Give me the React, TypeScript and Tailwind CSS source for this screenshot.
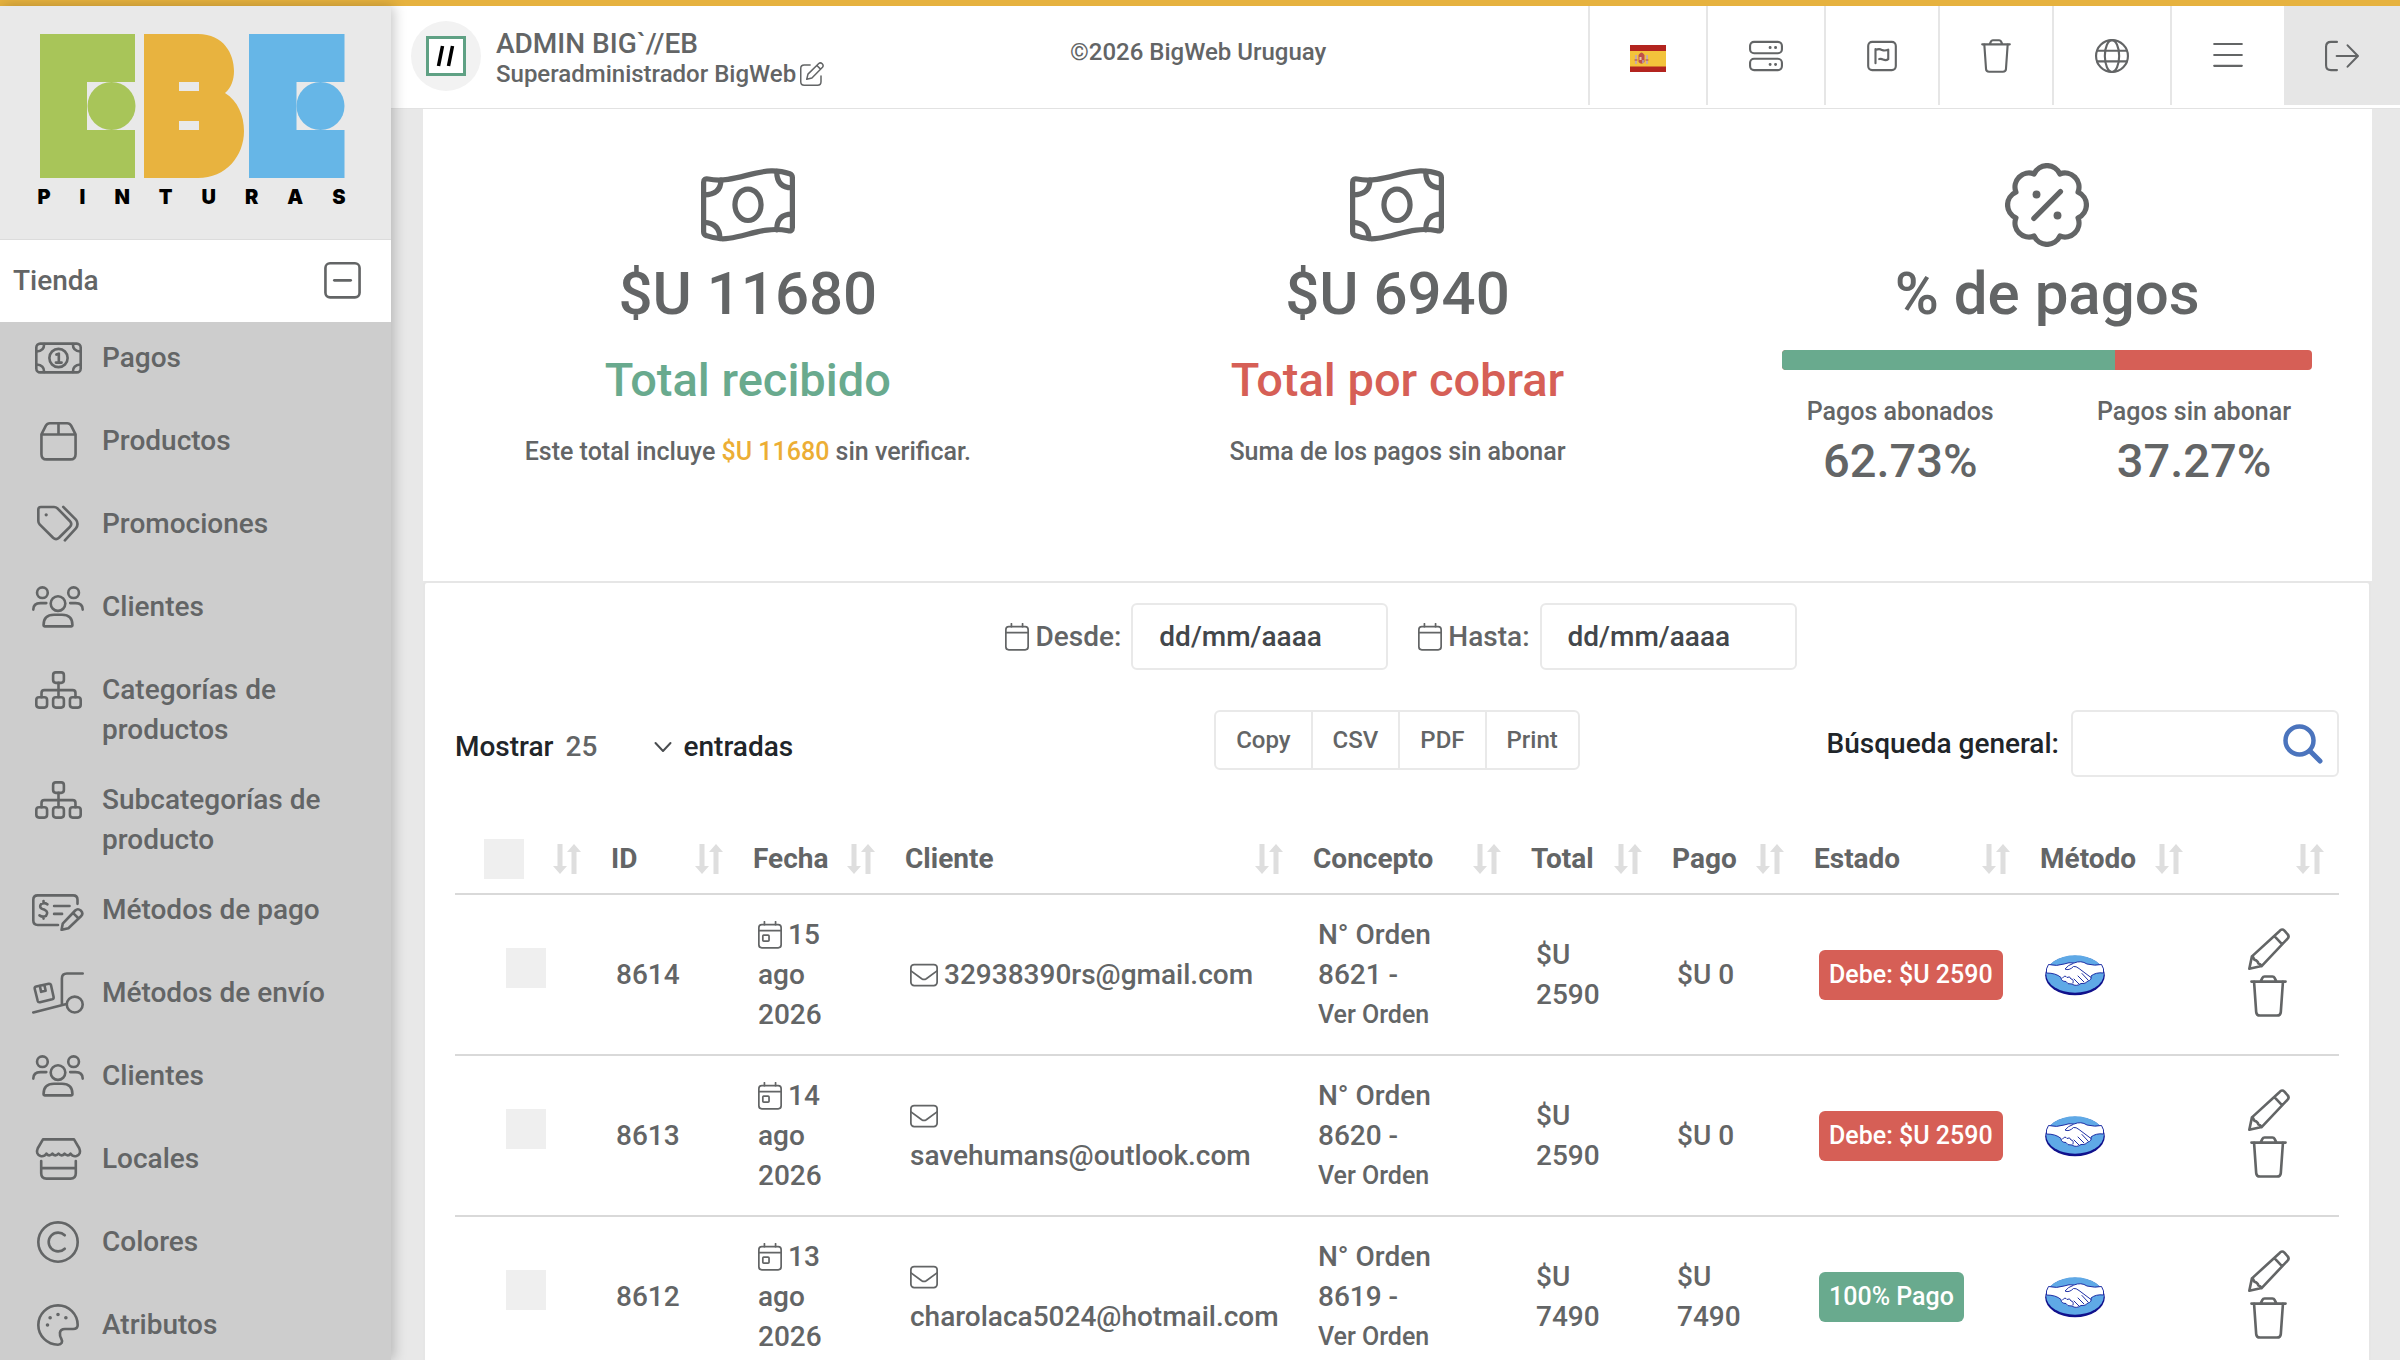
import { useState } from "react";
import type { ReactNode } from "react";

const box = { 448: "0 0 448 512", 512: "0 0 512 512", 576: "0 0 576 512", 640: "0 0 640 512" };

const Icon = ({
  w = 512,
  className = "",
  children,
}: {
  w?: 448 | 512 | 576 | 640;
  className?: string;
  children: ReactNode;
}) => (
  <svg
    viewBox={box[w]}
    className={className}
    fill="none"
    stroke="currentColor"
    strokeWidth="32"
    strokeLinecap="round"
    strokeLinejoin="round"
    aria-hidden="true"
  >
    {children}
  </svg>
);

const trashPath = (
  <>
    <path d="M16 80H432M128 78L150 34Q158 18 176 18H272Q290 18 298 34L320 78" />
    <path d="M48 82L74 452Q77 494 120 494H328Q371 494 374 452L400 82" />
  </>
);

const BillIcon = () => (
  <Icon w={576} className="h-[42px] w-[47px]">
    <rect x="16" y="80" width="544" height="352" rx="48" />
    <circle cx="288" cy="256" r="112" />
    <path d="M112 84Q112 172 20 176M464 84Q464 172 556 176M112 428Q112 340 20 336M464 428Q464 340 556 336" />
    <path d="M262 214L292 202V310M256 312H326" />
  </Icon>
);

const BoxIcon = () => (
  <Icon w={448} className="h-[42px] w-[37px]">
    <path d="M16 176V416Q16 480 80 480H368Q432 480 432 416V176ZM16 176L70 68Q86 40 118 40H330Q362 40 378 68L432 176M224 40V176" />
  </Icon>
);

const TagsIcon = () => (
  <Icon className="h-[42px] w-[42px]">
    <path d="M16 80V220Q16 244 32 260L196 424Q232 456 268 424L400 292Q436 256 400 220L252 68Q230 48 208 48H48Q16 48 16 80Z" />
    <path d="M320 48L474 202Q514 256 474 310L340 456" />
    <circle cx="112" cy="144" r="10" fill="currentColor" strokeWidth="20" />
  </Icon>
);

const UsersIcon = () => (
  <Icon w={640} className="h-[42px] w-[52px]">
    <circle cx="128" cy="80" r="66" />
    <circle cx="512" cy="80" r="66" />
    <circle cx="320" cy="214" r="90" />
    <path d="M16 288Q16 208 104 208H176M624 288Q624 208 536 208H470" />
    <path d="M142 480Q142 352 270 352H370Q498 352 498 480Q498 494 484 494H156Q142 494 142 480Z" />
  </Icon>
);

const SitemapIcon = () => (
  <Icon w={576} className="h-[42px] w-[47px]">
    <rect x="222" y="40" width="132" height="128" rx="34" />
    <rect x="16" y="344" width="132" height="128" rx="34" />
    <rect x="222" y="344" width="132" height="128" rx="34" />
    <rect x="428" y="344" width="132" height="128" rx="34" />
    <path d="M288 168V344M80 344V292Q80 258 114 258H462Q496 258 496 292V344" />
  </Icon>
);

const CheckIcon = () => (
  <Icon w={640} className="h-[42px] w-[52px]">
    <path d="M320 440H70Q16 440 16 386V130Q16 76 70 76H506Q560 76 560 130V180" />
    <path d="M190 186Q150 160 114 182Q82 218 124 242L156 254Q208 282 172 328Q132 350 92 322M142 146V172M142 342V362M272 206H462M272 304H370" />
    <path d="M364 500L378 424L532 262Q564 232 600 262Q636 294 606 330L448 480ZM504 292L574 360" />
  </Icon>
);

const DollyIcon = () => (
  <Icon w={640} className="h-[42px] w-[52px]">
    <path d="M624 16H430Q368 16 368 78V404M16 496L424 390" />
    <circle cx="526" cy="398" r="98" />
    <path d="M34 206Q28 182 52 176L206 142Q228 138 234 160L266 306Q270 328 248 334L98 370Q76 374 70 352ZM96 166L112 242L168 228L152 154" />
  </Icon>
);

const StoreIcon = () => (
  <Icon w={576} className="h-[42px] w-[47px]">
    <path d="M98 16H478L542 124Q572 196 508 220Q462 230 436 190Q404 232 362 190Q326 232 288 190Q250 232 214 190Q172 232 140 190Q114 230 68 220Q4 196 34 124Z" />
    <path d="M76 280V430Q76 496 140 496H436Q500 496 500 430V280M76 368H500" />
  </Icon>
);

const CopyrightIcon = () => (
  <Icon className="h-[42px] w-[42px]">
    <circle cx="256" cy="256" r="240" />
    <path d="M338 174A115 115 0 1 0 338 338" />
  </Icon>
);

const PaletteIcon = () => (
  <Icon className="h-[42px] w-[42px]">
    <path d="M256 16C124 16 16 124 16 256S124 496 256 496C300 496 318 462 296 424C276 388 258 304 340 304H440C474 304 496 286 496 256C496 124 388 16 256 16Z" />
    <g fill="currentColor" strokeWidth="26">
      <circle cx="128" cy="256" r="9" />
      <circle cx="160" cy="168" r="9" />
      <circle cx="256" cy="128" r="9" />
      <circle cx="352" cy="168" r="9" />
    </g>
  </Icon>
);

const BillWaveIcon = () => (
  <Icon w={576} className="h-[84px] w-[94px]">
    <path d="M16 116C16 98 28 94 44 97C186 124 300 52 430 47C480 46 516 54 544 64Q560 70 560 88V394C560 412 548 418 534 414C398 386 300 440 172 460C120 468 76 460 34 444Q16 438 16 420Z" />
    <path d="M122 104Q122 192 18 194M464 50Q464 150 558 150M18 362Q116 366 116 462M464 408Q464 312 558 312" />
    <ellipse cx="288" cy="255" rx="80" ry="96" />
  </Icon>
);

const BadgePercentIcon = () => (
  <Icon className="h-[84px] w-[84px]">
    <path d="M334.5 66.6A86 86 0 0 1 445.4 177.5A86 86 0 0 1 445.4 334.5A86 86 0 0 1 334.5 445.4A86 86 0 0 1 177.5 445.4A86 86 0 0 1 66.6 334.5A86 86 0 0 1 66.6 177.5A86 86 0 0 1 177.5 66.6A86 86 0 0 1 334.5 66.6Z" />
    <path d="M338 174L176 338" />
    <g fill="currentColor" stroke="none">
      <circle cx="192" cy="192" r="24" />
      <circle cx="320" cy="320" r="24" />
    </g>
  </Icon>
);

const CalendarIcon = ({ day = false }: { day?: boolean }) => (
  <Icon w={448} className="inline-block h-7 w-6">
    <rect x="16" y="64" width="416" height="432" rx="56" />
    <path d="M16 176H432M120 8V64M328 8V64" />
    {day && <rect x="90" y="258" width="116" height="112" rx="18" />}
  </Icon>
);

const MailIcon = () => (
  <Icon className="inline-block h-7 w-7">
    <rect x="16" y="64" width="480" height="384" rx="60" />
    <path d="M18 180L214 324Q256 350 298 324L494 180" />
  </Icon>
);

const SortIcon = () => (
  <svg viewBox="0 0 28 30" className="h-[30px] w-7 shrink-0 fill-[#dedede]" aria-hidden="true">
    <path d="M4.500 0H9.500V22H14L7 30L0 22H4.500ZM18.500 30H23.500V8H28L21 0L14 8H18.500Z" />
  </svg>
);

const SpainFlag = () => (
  <svg viewBox="0 0 36 27" className="mt-1.5 h-[27px] w-9" aria-hidden="true">
    <rect width="36" height="27" fill="#b3241f" />
    <rect y="6" width="36" height="15.500" fill="#f3c33b" />
    <path d="M8.500 10Q11.500 5 14.500 10V17Q11.500 20.500 8.500 17Z" fill="#c0504a" />
    <path d="M9.500 12H11.500V15H9.500Z" fill="#e8c7a8" />
    <path d="M12 15H14V18H12Z" fill="#b98d9a" />
    <path d="M5 10H7V19H5ZM16 10H18V19H16Z" fill="#c9a9a6" />
    <path d="M4.500 15H7.500M15.500 15H18.500" stroke="#b3443c" />
  </svg>
);

const HandshakeLogo = () => (
  <svg viewBox="0 0 60 42" className="h-[42px] w-[60px]" role="img" aria-label="Mercado Pago">
    <ellipse cx="30" cy="21.500" rx="29.800" ry="19.800" fill="#10108c" />
    <ellipse cx="30" cy="20" rx="28.800" ry="18.800" fill="#5fa9e6" />
    <path
      d="M3.500 10.500Q12 12.500 19 10Q24 8 29 9Q36 6 42 10Q50 12 56.500 10.500Q59.500 15 58.500 19Q51 18 46 22Q47 26 43 27Q40 30.500 36 29.500Q31 33 27 30Q22 30.500 21 27.500Q16 27.500 16 23.500Q11 19 1.500 19Q0.500 15 3.500 10.500Z"
      fill="#fff"
      stroke="#1f2fa5"
      strokeWidth="1"
    />
    <path
      d="M28 9.500Q23 11 20 15Q24 17 28.500 12.500Q31 12 34 14.500L46 23.500M33 22L39 28M37 19.500L43 26M29 25L34 30M17.500 24Q20 20.500 22 23.500Q25 21.500 26 25Q29 25 28 29"
      fill="none"
      stroke="#1f2fa5"
      strokeWidth="1"
      strokeLinecap="round"
    />
  </svg>
);

const BrandLogo = () => (
  <div className="w-[308px]">
    <svg viewBox="0 0 308 144" className="w-full" role="img" aria-label="EBE">
      <path d="M2 0H97V48H49V96H97V144H2Z" fill="#a8c559" />
      <circle cx="73.500" cy="72" r="24" fill="#a8c559" />
      <path
        fillRule="evenodd"
        d="M106 0H160C186 0 196 20 196 37C196 46 193 54 187 59C200 67 206 82 206 97C206 122 188 144 160 144H106ZM141 48V57H161V48ZM141 87V96H161V87Z"
        fill="#e8b33f"
      />
      <path d="M211 0H306.500V48H258.500V96H306.500V144H211Z" fill="#66b6e7" />
      <circle cx="282.500" cy="72" r="24" fill="#66b6e7" />
    </svg>
    <p className="mt-[7px] flex justify-between font-[Inter,sans-serif] text-[20px] leading-6 font-black text-black">
      {"PINTURAS".split("").map((letter, index) => (
        <span key={index}>{letter}</span>
      ))}
    </p>
  </div>
);

const menu = [
  { label: "Pagos", icon: <BillIcon /> },
  { label: "Productos", icon: <BoxIcon /> },
  { label: "Promociones", icon: <TagsIcon /> },
  { label: "Clientes", icon: <UsersIcon /> },
  { label: "Categorías de productos", icon: <SitemapIcon /> },
  { label: "Subcategorías de producto", icon: <SitemapIcon /> },
  { label: "Métodos de pago", icon: <CheckIcon /> },
  { label: "Métodos de envío", icon: <DollyIcon /> },
  { label: "Clientes", icon: <UsersIcon /> },
  { label: "Locales", icon: <StoreIcon /> },
  { label: "Colores", icon: <CopyrightIcon /> },
  { label: "Atributos", icon: <PaletteIcon /> },
];

const toolbar = [
  { label: "Idioma", icon: <SpainFlag /> },
  {
    label: "Servidor",
    icon: (
      <Icon className="h-[34px] w-9">
        <rect x="16" y="44" width="480" height="170" rx="60" />
        <rect x="16" y="298" width="480" height="170" rx="60" />
        <path d="M318 128V130M400 128V130M318 382V384M400 382V384" strokeWidth="44" />
      </Icon>
    ),
  },
  {
    label: "Reportes",
    icon: (
      <Icon w={448} className="h-[34px] w-8">
        <rect x="16" y="44" width="416" height="424" rx="60" />
        <path d="M126 150V366M126 168Q180 138 224 166Q268 184 318 160V304Q284 330 240 310Q216 294 182 302" />
      </Icon>
    ),
  },
  {
    label: "Papelera",
    icon: (
      <Icon w={448} className="h-[34px] w-8">
        {trashPath}
      </Icon>
    ),
  },
  {
    label: "Sitio web",
    icon: (
      <Icon className="h-[34px] w-9">
        <circle cx="256" cy="256" r="240" />
        <ellipse cx="256" cy="256" rx="108" ry="240" />
        <path d="M32 176H480M32 336H480" />
      </Icon>
    ),
  },
  {
    label: "Menú",
    icon: (
      <Icon w={448} className="h-[34px] w-8">
        <path d="M16 76H432M16 240H432M16 404H432" />
      </Icon>
    ),
  },
];

const columns = [
  { name: "", width: "w-[141px]" },
  { name: "ID", width: "w-[142px]" },
  { name: "Fecha", width: "w-[152px]" },
  { name: "Cliente", width: "w-[408px]" },
  { name: "Concepto", width: "w-[218px]" },
  { name: "Total", width: "w-[141px]" },
  { name: "Pago", width: "w-[142px]" },
  { name: "Estado", width: "w-[226px]" },
  { name: "Método", width: "w-[173px]" },
  { name: "", width: "w-[141px]" },
];

const payments = [
  { id: 8614, day: 15, email: "32938390rs@gmail.com", order: 8621, total: "2590", paid: "0", debt: "2590" },
  { id: 8613, day: 14, email: "savehumans@outlook.com", order: 8620, total: "2590", paid: "0", debt: "2590" },
  { id: 8612, day: 13, email: "charolaca5024@hotmail.com", order: 8619, total: "7490", paid: "7490", debt: "" },
];

const Sidebar = () => {
  const [open, setOpen] = useState(true);

  return (
    <aside className="relative z-10 w-[391px] shrink-0 bg-[#cdcdcd] shadow-[3px_0_12px_rgba(0,0,0,0.22)]">
      <div className="flex justify-center border-b border-[#dcdcdc] bg-[#e9e9e9] pt-7 pr-2 pb-[30px]">
        <BrandLogo />
      </div>
      <button
        className="flex h-[82px] w-full items-center justify-between bg-white pr-[30px] pl-[13px]"
        aria-expanded={open}
        onClick={() => setOpen(!open)}
      >
        <span>Tienda</span>
        <Icon w={448} className="h-[42px] w-[37px]">
          <rect x="16" y="40" width="416" height="416" rx="56" />
          <path d={open ? "M124 248H324" : "M124 248H324M224 148V348"} />
        </Icon>
      </button>
      {open && (
        <nav>
          {menu.map((item, index) => (
            <a
              key={index}
              href="#"
              className="flex min-h-[83px] gap-[18px] pt-4 pr-8 pb-3.5 pl-8"
            >
              <span className="flex h-10 w-[52px] shrink-0 items-center justify-center">
                {item.icon}
              </span>
              <span className="self-start">{item.label}</span>
            </a>
          ))}
        </nav>
      )}
    </aside>
  );
};

const Header = () => (
  <header className="flex items-start justify-between border-b border-[#e2e2e2] bg-white pb-[3px]">
    <div className="flex items-center gap-[15px] pt-[15px] pl-5">
      <span className="flex h-[70px] w-[70px] items-center justify-center rounded-full bg-[#f2f2f2]">
        <svg viewBox="0 0 40 40" className="h-10 w-10" aria-hidden="true">
          <rect x="1.500" y="1.500" width="37" height="37" fill="#fff" stroke="#5fa184" strokeWidth="3" />
          <path d="M12.500 30L16.500 10M22.500 30L26.500 10" stroke="#000" strokeWidth="3.500" />
        </svg>
      </span>
      <div className="pt-1">
        <p className="leading-8">ADMIN BIG`//EB</p>
        <p className="flex items-center gap-1 text-[24px] leading-7">
          Superadministrador BigWeb
          <Icon className="h-6 w-6">
            <path d="M216 64H90Q16 64 16 138V422Q16 496 90 496H374Q448 496 448 422V300" />
            <path d="M144 368L170 258L400 32Q436 2 474 38Q510 76 480 112L254 342ZM360 74L438 152" />
          </Icon>
        </p>
      </div>
    </div>
    <p className="pt-[26px] pr-4 text-[24px] leading-10">©2026 BigWeb Uruguay</p>
    <div className="flex h-[99px]">
      {toolbar.map((item) => (
        <button
          key={item.label}
          aria-label={item.label}
          className="flex items-center border-l-2 border-[#e6e6e6] px-10"
        >
          {item.icon}
        </button>
      ))}
      <button aria-label="Salir" className="flex items-center bg-[#e6e6e6] px-10">
        <Icon className="h-[34px] w-9">
          <path d="M180 44H90Q16 44 16 118V394Q16 468 90 468H180M176 256H494M340 96L496 256L340 416" />
        </Icon>
      </button>
    </div>
  </header>
);

const Summary = () => {
  const paid = 62.73;

  return (
    <section className="mr-7 ml-8 grid h-[472px] grid-cols-3 bg-white pt-[54px] text-center">
      <div className="flex flex-col items-center">
        <BillWaveIcon />
        <h2 className="mt-[11px] text-[60px] leading-[72px]">$U 11680</h2>
        <h3 className="mt-5 text-[47px] leading-[60px] text-[#69aa8e]">Total recibido</h3>
        <p className="mt-[22px] text-[25px]">
          Este total incluye <span className="text-[#ecae35]">$U 11680</span> sin verificar.
        </p>
      </div>
      <div className="flex flex-col items-center">
        <BillWaveIcon />
        <h2 className="mt-[11px] text-[60px] leading-[72px]">$U 6940</h2>
        <h3 className="mt-5 text-[47px] leading-[60px] text-[#d65f56]">Total por cobrar</h3>
        <p className="mt-[22px] text-[25px]">Suma de los pagos sin abonar</p>
      </div>
      <div className="flex flex-col items-center">
        <BadgePercentIcon />
        <h2 className="mt-[11px] text-[60px] leading-[72px]">% de pagos</h2>
        <div className="w-full px-[60px] pt-5">
          <div className="h-5 overflow-hidden rounded bg-[#d65f56]">
            <div className="h-full bg-[#69aa8e]" style={{ width: `${paid}%` }} />
          </div>
        </div>
        <div className="mt-[22px] grid w-full grid-cols-2 px-[31px]">
          <div>
            <p className="text-[25px]">Pagos abonados</p>
            <p className="text-[47px] leading-[58px]">{paid}%</p>
          </div>
          <div>
            <p className="text-[25px]">Pagos sin abonar</p>
            <p className="text-[47px] leading-[58px]">{(100 - paid).toFixed(2)}%</p>
          </div>
        </div>
      </div>
    </section>
  );
};

const DateField = ({ id, label }: { id: string; label: string }) => (
  <div className="flex items-center gap-2.5">
    <label htmlFor={id} className="flex items-center gap-1.5">
      <CalendarIcon />
      {label}
    </label>
    <input
      id={id}
      type="text"
      placeholder="dd/mm/aaaa"
      className="h-[67px] w-[257px] rounded-md border-2 border-[#e9e9e9] px-[26px] placeholder:text-[#43474b]"
    />
  </div>
);

const PaymentsTable = () => (
  <table className="mt-12 w-full table-fixed border-separate border-spacing-0">
    <thead>
      <tr>
        {columns.map((column, index) => (
          <th
            key={index}
            className={`${column.width} h-[70px] border-b-2 border-[#d9d9d9] px-[15px] text-left font-bold`}
          >
            <div className="flex items-center justify-between">
              {index === 0 ? (
                <input
                  type="checkbox"
                  aria-label="Seleccionar todos"
                  className="ml-3.5 h-10 w-10 appearance-none bg-[#efefef] checked:bg-[#69aa8e]"
                />
              ) : (
                <span>{column.name}</span>
              )}
              <SortIcon />
            </div>
          </th>
        ))}
      </tr>
    </thead>
    <tbody>
      {payments.map((payment) => (
        <tr
          key={payment.id}
          className="[&>td]:border-b-2 [&>td]:border-[#d9d9d9] [&>td]:px-5 [&>td]:pt-5 [&>td]:pb-[19px]"
        >
          <td>
            <input
              type="checkbox"
              aria-label={`Seleccionar ${payment.id}`}
              className="mx-auto mb-3.5 block h-10 w-10 appearance-none bg-[#efefef] checked:bg-[#69aa8e]"
            />
          </td>
          <td>{payment.id}</td>
          <td>
            <span className="flex items-center gap-1.5">
              <CalendarIcon day />
              {payment.day}
            </span>
            ago
            <br />
            2026
          </td>
          <td>
            <span className="flex flex-wrap items-center gap-x-1.5">
              <span className="flex h-10 items-center">
                <MailIcon />
              </span>
              {payment.email}
            </span>
          </td>
          <td>
            N° Orden
            <br />
            {payment.order} -
            <a href="#" className="block text-[25px]">
              Ver Orden
            </a>
          </td>
          <td>
            $U
            <br />
            {payment.total}
          </td>
          <td>
            $U {payment.paid.length > 1 && <br />}
            {payment.paid}
          </td>
          <td>
            {payment.debt ? (
              <span className="inline-block rounded-md bg-[#d65f56] px-2.5 py-[5px] text-[25px] text-white">
                Debe: $U {payment.debt}
              </span>
            ) : (
              <span className="inline-block rounded-md bg-[#69aa8e] px-2.5 py-[5px] text-[25px] text-white">
                100% Pago
              </span>
            )}
          </td>
          <td>
            <HandshakeLogo />
          </td>
          <td>
            <div className="mb-1.5 flex flex-col items-center gap-[5px]">
              <button aria-label="Editar">
                <Icon className="h-[42px] w-[42px]">
                  <path d="M16 496L48 346L386 36Q414 4 444 32L482 76Q508 104 480 132L166 464ZM322 98L414 196M48 346Q64 350 78 386Q118 394 128 434Q150 440 166 464" />
                </Icon>
              </button>
              <button aria-label="Eliminar">
                <Icon w={448} className="h-[42px] w-[37px]">
                  {trashPath}
                </Icon>
              </button>
            </div>
          </td>
        </tr>
      ))}
    </tbody>
  </table>
);

const App = () => {
  const [entries, setEntries] = useState("25");

  return (
    <div className="flex h-screen flex-col overflow-hidden bg-[#e8e8e8] font-[Roboto,sans-serif] text-[28px] leading-10 font-medium text-[#636566]">
      <div className="h-1.5 shrink-0 bg-[#e6b23f]" />
      <div className="flex min-h-0 flex-1">
        <Sidebar />
        <div className="min-w-0 flex-1">
          <Header />
          <main>
            <Summary />
            <section className="mr-[29px] ml-8 rounded-t-sm border-2 border-[#e6e6e6] bg-white pt-5 pr-[30px] pl-[30px]">
              <div className="flex justify-center gap-[30px] pl-2">
                <DateField id="desde" label="Desde:" />
                <DateField id="hasta" label="Hasta:" />
              </div>
              <div className="mt-10 grid grid-cols-3">
                <label className="flex items-center gap-3 pt-1.5 text-[#212529]">
                  Mostrar
                  <span className="flex items-center">
                    <select
                      value={entries}
                      onChange={(event) => setEntries(event.target.value)}
                      className="w-[88px] appearance-none bg-transparent text-[#636566]"
                    >
                      <option>25</option>
                      <option>50</option>
                      <option>100</option>
                    </select>
                    <svg viewBox="0 0 18 12" className="h-3 w-[18px]" fill="none" stroke="#4a4d50" strokeWidth="2" aria-hidden="true">
                      <path d="M1.500 2L9 10L16.500 2" strokeLinecap="round" strokeLinejoin="round" />
                    </svg>
                  </span>
                  <span>entradas</span>
                </label>
                <div className="flex justify-center">
                  <div className="flex h-[60px] divide-x-2 divide-[#e9e9e9] rounded-md border-2 border-[#e9e9e9] text-[24px]">
                    {["Copy", "CSV", "PDF", "Print"].map((label) => (
                      <button key={label} className="px-5">
                        {label}
                      </button>
                    ))}
                  </div>
                </div>
                <div className="flex items-center justify-end gap-3 text-[#212529]">
                  <label htmlFor="buscar">Búsqueda general:</label>
                  <div className="flex h-[67px] w-[268px] items-center rounded-md border-2 border-[#e9e9e9] pr-3.5 pl-4">
                    <input id="buscar" type="search" className="w-full min-w-0 outline-none" />
                    <svg viewBox="0 0 40 40" className="h-10 w-10 shrink-0" fill="none" stroke="#4b74bd" aria-hidden="true">
                      <circle cx="16.500" cy="16.500" r="14" strokeWidth="4.500" />
                      <path d="M27 27L37 37" strokeWidth="5" strokeLinecap="round" />
                    </svg>
                  </div>
                </div>
              </div>
              <PaymentsTable />
            </section>
          </main>
        </div>
      </div>
    </div>
  );
};

export default App;
